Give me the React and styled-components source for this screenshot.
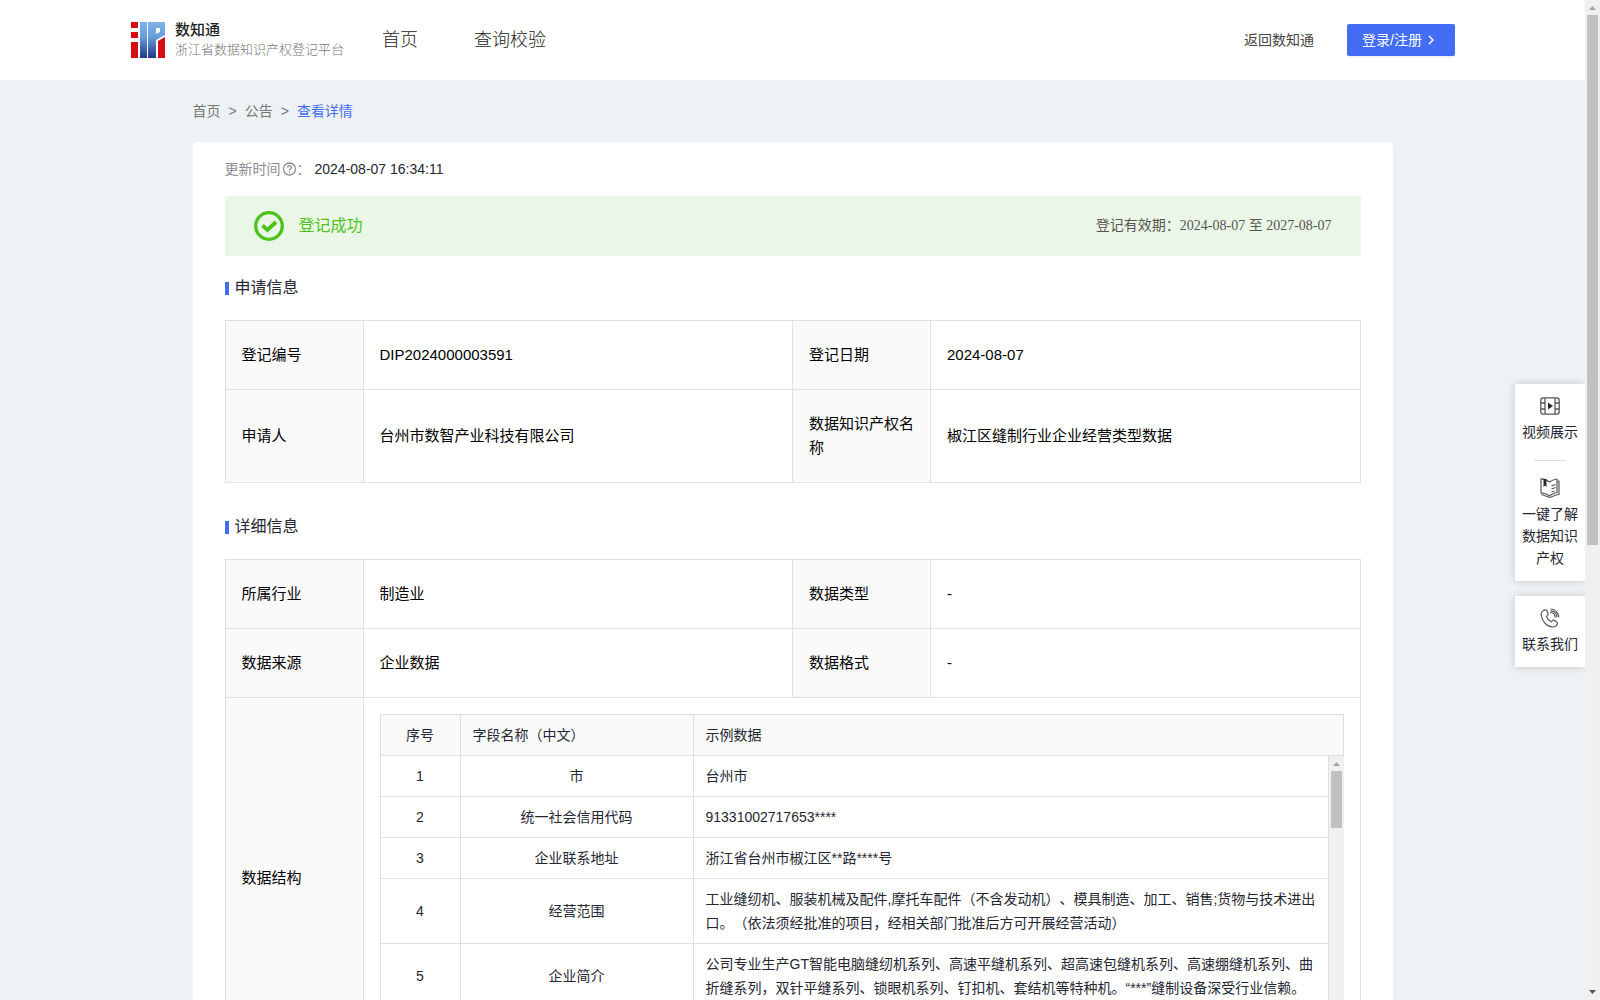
import React from "react";
import styled, { createGlobalStyle, css } from "styled-components";

const Global = createGlobalStyle`
  * { box-sizing: border-box; }
  body {
    margin: 0;
    background: #eef2f5;
    color: #252632;
    font-family: "Liberation Sans", "Noto Sans CJK SC", sans-serif;
    font-size: 14px;
    line-height: 24px;
    text-spacing-trim: space-all;
  }
  a { color: inherit; text-decoration: none; }
  table { border-collapse: collapse; table-layout: fixed; width: 100%; }
`;

const Shell = styled.div`
  display: grid;
  grid-template-columns: minmax(0, 1fr) 15px;
  height: 100vh;
  overflow: hidden;
`;

const Page = styled.div`
  position: relative;
  overflow: hidden;
`;

const Header = styled.header`
  display: flex;
  align-items: center;
  height: 80px;
  padding: 0 130px;
  background: #fff;
`;

const Brand = styled.a`
  display: flex;
  align-items: center;
  gap: 9px;
`;

const BrandText = styled.div`
  display: flex;
  flex-direction: column;
  line-height: 20px;
`;

const BrandName = styled.strong`
  font-size: 15px;
  font-weight: 500;
  color: #222;
`;

const BrandSub = styled.span`
  font-size: 13px;
  font-weight: 300;
  color: #777;
`;

const Nav = styled.nav`
  display: flex;
  flex: 1;
  gap: 56px;
  margin-left: 38px;
  font-size: 18px;
  font-weight: 300;
  color: #222;
`;

const BackLink = styled.a`
  margin-right: 33px;
  color: #444;
`;

const LoginButton = styled.button`
  display: flex;
  align-items: center;
  gap: 3px;
  width: 108px;
  height: 32px;
  padding: 0 15px;
  border: 0;
  border-radius: 2px;
  background: #436df5;
  box-shadow: 0 2px 0 rgba(0, 0, 0, 0.05);
  color: #fff;
  font: inherit;
  white-space: nowrap;
`;

const Content = styled.main`
  width: 1200px;
  max-width: 100%;
  margin: 0 auto;
`;

const Crumbs = styled.nav`
  display: flex;
  gap: 8px;
  padding: 19px 0;
  color: #777;
`;

const CurrentCrumb = styled.a`
  color: #436df5;
`;

const Card = styled.section`
  padding: 15px 32px;
  border-radius: 4px;
  background: #fff;
`;

const Updated = styled.div`
  display: flex;
  align-items: center;
  color: #8c8c93;
`;

const Stamp = styled.time`
  margin-left: 4px;
  color: #252632;
`;

const Banner = styled.div`
  display: flex;
  align-items: center;
  gap: 15px;
  height: 60px;
  margin-top: 15px;
  padding: 0 29px;
  background: #ebf7e6;
`;

const BannerStatus = styled.span`
  flex: 1;
  font-size: 16px;
  color: #4bc31b;
`;

const Validity = styled.span`
  font-family: "Liberation Serif", "Noto Sans CJK SC", serif;
  color: #555;
`;

const SectionTitle = styled.h2`
  display: flex;
  align-items: center;
  gap: 6px;
  margin: ${(p) => p.$top}px 0 20px;
  font-size: 16px;
  font-weight: 400;
  line-height: 24px;
  &::before {
    content: "";
    width: 4px;
    height: 13px;
    background: #436df5;
  }
`;

const line = css`1px solid #e0e0e0`;

const InfoLabel = styled.th`
  padding: 22px 16px;
  border: ${line};
  background: #fafafa;
  color: #000;
  font-size: 15px;
  font-weight: 400;
  text-align: left;
`;

const InfoValue = styled.td`
  padding: ${(p) => (p.$nested ? "16px" : "22px 16px")};
  border: ${line};
  color: #000;
  font-size: 15px;
`;

const HeadCell = styled.th`
  padding: 8px 12px;
  border: ${line};
  background: #fafafa;
  color: #252632;
  font-size: 14px;
  font-weight: 400;
  text-align: ${(p) => (p.$center ? "center" : "left")};
`;

const BodyCell = styled.td`
  padding: 8px 12px;
  border: ${line};
  border-top: 0;
  color: #252632;
  font-size: 14px;
  text-align: ${(p) => (p.$center ? "center" : "left")};
`;

const BodyView = styled.div`
  display: grid;
  grid-template-columns: minmax(0, 1fr) 15px;
  height: 286px;
  overflow: hidden;
`;

const BodyTable = styled.table`
  align-self: start;
`;

const Rail = styled.div`
  display: flex;
  flex-direction: column;
  justify-content: space-between;
  align-items: center;
  background: #f0f0f0;
`;

const RailGroup = styled.div`
  display: flex;
  flex-direction: column;
`;

const Thumb = styled.div`
  width: 11px;
  height: ${(p) => p.$size};
  margin: 0 2px;
  background: #c1c1c1;
`;

const RailArrow = styled.svg`
  display: block;
  width: 15px;
  height: 15px;
`;

const Side = styled.aside`
  position: absolute;
  top: 384px;
  right: 0;
  display: flex;
  flex-direction: column;
  gap: 15px;
  width: 70px;
`;

const SideBox = styled.div`
  display: flex;
  flex-direction: column;
  align-items: center;
  padding: 12px 7px;
  background: #fff;
  box-shadow: 0 0 8px rgba(0, 0, 0, 0.18);
`;

const SideLink = styled.a`
  display: flex;
  flex-direction: column;
  align-items: center;
  gap: 5px;
  line-height: 22px;
  text-align: center;
`;

const SideRule = styled.hr`
  width: 32px;
  height: 1px;
  margin: 17px 0;
  border: 0;
  background: #dcdcdc;
`;

function Scrollbar({ size }) {
  return (
    <Rail aria-hidden="true">
      <RailGroup>
        <RailArrow viewBox="0 0 15 15"><path d="M4 10h7L7.5 6z" fill="#a3a3a3" /></RailArrow>
        <Thumb $size={size} />
      </RailGroup>
      <RailArrow viewBox="0 0 15 15"><path d="M4 5h7L7.5 9z" fill="#505050" /></RailArrow>
    </Rail>
  );
}

const Logo = () => (
  <svg width="36" height="36" viewBox="0 0 36 36" aria-hidden="true">
    <defs>
      <linearGradient id="logoBlue" gradientUnits="userSpaceOnUse" x1="0" y1="0" x2="0" y2="36">
        <stop offset="0" stopColor="#7fb2e8" />
        <stop offset=".4" stopColor="#6a9edb" />
        <stop offset="1" stopColor="#22388a" />
      </linearGradient>
    </defs>
    <path d="M1 0h7v6H1zM1 10h7v6H1zM1 20h7v16H1zM28 19l7-4v21h-7z" fill="#d60d12" />
    <path d="M10 0h7v36h-7z" fill="url(#logoBlue)" />
    <path d="M18 0h17v13l-9 5v18h-8zM26 6v6l4-2V6z" fillRule="evenodd" fill="url(#logoBlue)" />
  </svg>
);

const Chevron = () => (
  <svg width="12" height="12" viewBox="0 0 12 12" fill="none" stroke="#fff" strokeWidth="1.500" aria-hidden="true">
    <path d="M4 2l4 4-4 4" />
  </svg>
);

const Help = () => (
  <svg width="16" height="16" viewBox="0 0 16 16" fill="none" stroke="#8c8c93" strokeWidth="1.300" aria-hidden="true">
    <circle cx="8.500" cy="8" r="6" />
    <path d="M6.600 6.500c0-2.400 3.800-2.400 3.800 0 0 1.300-1.900 1.300-1.900 2.900M8.500 10.500v1.200" />
  </svg>
);

const Success = () => (
  <svg width="30" height="30" viewBox="0 0 30 30" fill="none" stroke="#4bc31b" aria-hidden="true">
    <circle cx="15" cy="15" r="13.300" strokeWidth="3.300" />
    <path d="M8.500 14.500l5 4.500 8.500-8" strokeWidth="3.800" />
  </svg>
);

const VideoIcon = () => (
  <svg width="20" height="20" viewBox="0 0 20 20" fill="none" stroke="#55555e" strokeWidth="1.300" aria-hidden="true">
    <rect x=".8" y="1.800" width="18.400" height="16.400" rx="2.500" />
    <path d="M5 2v16M15 2v16M1 7h4M1 13h4M15 7h4M15 13h4" />
    <path d="M8 6.500l5 3.500-5 3.500z" fill="#252632" stroke="none" />
  </svg>
);

const BookIcon = () => (
  <svg width="20" height="20" viewBox="0 0 20 20" fill="none" stroke="#55555e" strokeWidth="1.200" strokeLinejoin="round" aria-hidden="true">
    <path d="M1 .8c3 0 6 1 8.500 3.200C11.500 2.500 14 1.500 17 1v13.500c-3 .5-5.500 1.500-7.500 3.200C7 15.800 4 15 1 14.800z" />
    <path d="M17 3h2v13.500c-3 0-5 .8-8 2.700H9L1.500 16.500M11.500 8l4-1.500M11.500 11l4-1.500M11.500 14l3-1" />
    <path d="M3.500 1h3v8L5 7.500 3.500 9z" fill="#252632" stroke="none" />
  </svg>
);

const PhoneIcon = () => (
  <svg width="20" height="20" viewBox="0 0 20 20" fill="none" stroke="#55555e" strokeWidth="1.200" strokeLinejoin="round" strokeLinecap="round" aria-hidden="true">
    <path d="M5.500 1.800C3 2 1 4.200 1.200 7c.5 6 5.500 11.500 11.300 12 2.700.1 4.500-1.500 4.900-3.600.1-.8-.3-1.300-.9-1.700l-2.300-1.400c-.7-.4-1.300-.3-1.800.3l-1 1.200c-2-.8-4.200-3-5-5.200L7.700 7.400c.5-.5.6-1.100.3-1.700L6.900 2.600c-.3-.6-.8-.9-1.400-.8z" />
    <path d="M10.500 4.500c2.500.2 4.500 2 4.700 4.700M11 1c4 .2 7.400 3.500 7.700 7.700M11 2.800c3.200.2 5.800 2.800 6 6" />
  </svg>
);

const fields = [
  ["1", "市", "台州市"],
  ["2", "统一社会信用代码", "91331002717653****"],
  ["3", "企业联系地址", "浙江省台州市椒江区**路****号"],
  ["4", "经营范围", "工业缝纫机、服装机械及配件,摩托车配件（不含发动机）、模具制造、加工、销售;货物与技术进出口。（依法须经批准的项目，经相关部门批准后方可开展经营活动）"],
  ["5", "企业简介", "公司专业生产GT智能电脑缝纫机系列、高速平缝机系列、超高速包缝机系列、高速绷缝机系列、曲折缝系列，双针平缝系列、锁眼机系列、钉扣机、套结机等特种机。“***”缝制设备深受行业信赖。"],
];

const InfoCols = () => (
  <colgroup>
    <col style={{ width: 138 }} /><col /><col style={{ width: 138 }} /><col />
  </colgroup>
);

const FieldCols = () => (
  <colgroup>
    <col style={{ width: 80 }} /><col style={{ width: 233 }} /><col />
  </colgroup>
);

function InfoRow({ cells: [a, b, c, d] }) {
  return (
    <tr>
      <InfoLabel scope="row">{a}</InfoLabel><InfoValue>{b}</InfoValue>
      <InfoLabel scope="row">{c}</InfoLabel><InfoValue>{d}</InfoValue>
    </tr>
  );
}

export default function App() {
  return (
    <Shell>
      <Global />
      <Page>
        <Header>
          <Brand href="#">
            <Logo />
            <BrandText>
              <BrandName>数知通</BrandName>
              <BrandSub>浙江省数据知识产权登记平台</BrandSub>
            </BrandText>
          </Brand>
          <Nav>
            <a href="#">首页</a>
            <a href="#">查询校验</a>
          </Nav>
          <BackLink href="#">返回数知通</BackLink>
          <LoginButton type="button">登录/注册<Chevron /></LoginButton>
        </Header>
        <Content>
          <Crumbs>
            <a href="#">首页</a><span>&gt;</span>
            <a href="#">公告</a><span>&gt;</span>
            <CurrentCrumb href="#">查看详情</CurrentCrumb>
          </Crumbs>
          <Card>
            <Updated>
              更新时间<Help />：<Stamp>2024-08-07 16:34:11</Stamp>
            </Updated>
            <Banner>
              <Success />
              <BannerStatus>登记成功</BannerStatus>
              <Validity>登记有效期：2024-08-07 至 2027-08-07</Validity>
            </Banner>
            <SectionTitle $top={20}>申请信息</SectionTitle>
            <table>
              <InfoCols />
              <tbody>
                <InfoRow cells={["登记编号", "DIP2024000003591", "登记日期", "2024-08-07"]} />
                <InfoRow cells={["申请人", "台州市数智产业科技有限公司", "数据知识产权名称", "椒江区缝制行业企业经营类型数据"]} />
              </tbody>
            </table>
            <SectionTitle $top={32}>详细信息</SectionTitle>
            <table>
              <InfoCols />
              <tbody>
                <InfoRow cells={["所属行业", "制造业", "数据类型", "-"]} />
                <InfoRow cells={["数据来源", "企业数据", "数据格式", "-"]} />
                <tr>
                  <InfoLabel scope="row">数据结构</InfoLabel>
                  <InfoValue colSpan={3} $nested>
                    <table>
                      <FieldCols />
                      <thead>
                        <tr>
                          <HeadCell $center>序号</HeadCell>
                          <HeadCell>字段名称（中文）</HeadCell>
                          <HeadCell>示例数据</HeadCell>
                        </tr>
                      </thead>
                    </table>
                    <BodyView>
                      <BodyTable>
                        <FieldCols />
                        <tbody>
                          {fields.map(([n, name, sample]) => (
                            <tr key={n}>
                              <BodyCell $center>{n}</BodyCell>
                              <BodyCell $center>{name}</BodyCell>
                              <BodyCell>{sample}</BodyCell>
                            </tr>
                          ))}
                        </tbody>
                      </BodyTable>
                      <Scrollbar size="57px" />
                    </BodyView>
                  </InfoValue>
                </tr>
              </tbody>
            </table>
          </Card>
        </Content>
        <Side>
          <SideBox>
            <SideLink href="#"><VideoIcon />视频展示</SideLink>
            <SideRule />
            <SideLink href="#"><BookIcon />一键了解数据知识产权</SideLink>
          </SideBox>
          <SideBox>
            <SideLink href="#"><PhoneIcon />联系我们</SideLink>
          </SideBox>
        </Side>
      </Page>
      <Scrollbar size="53vh" />
    </Shell>
  );
}
